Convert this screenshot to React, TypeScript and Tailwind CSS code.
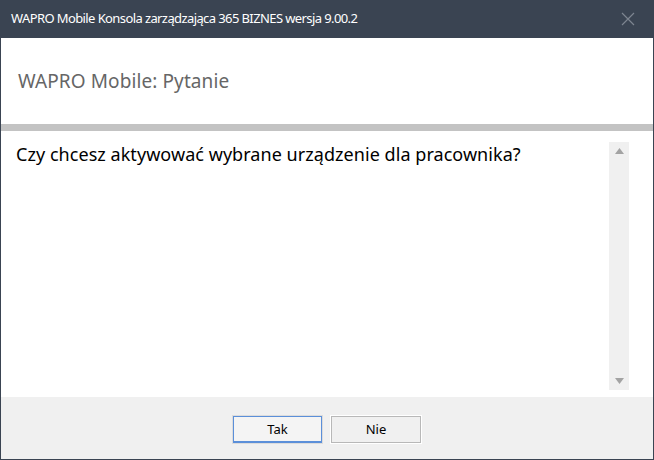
export default function App() {
  return (
    <div className="w-[654px] h-[460px] flex flex-col bg-white border-x border-b border-[#3a4452]" style={{ fontFamily: '"Noto Sans", "Open Sans", sans-serif' }}>
      <div className="h-[38px] shrink-0 bg-[#3a4452] flex items-center justify-between pl-[10px] pr-[18px]">
        <span className="text-[13px] text-white tracking-[-0.6px]">WAPRO Mobile Konsola zarządzająca 365 BIZNES wersja 9.00.2</span>
        <svg width="14" height="14" viewBox="0 0 14 14"><path d="M1 1L13 13M13 1L1 13" stroke="#7d8590" strokeWidth="1.2" /></svg>
      </div>
      <div className="h-[86px] shrink-0 flex items-center pl-[17px]">
        <span className="text-[19px] text-[#666666] tracking-[0.1px]">WAPRO Mobile: Pytanie</span>
      </div>
      <div className="h-[7px] shrink-0 bg-[#c3c3c3]" />
      <div className="flex-1 flex pl-[15px] pr-[24px] pt-[11px] pb-[7px]">
        <div className="flex-1 text-[18px] text-black tracking-[0.05px] leading-[24px]">Czy chcesz aktywować wybrane urządzenie dla pracownika?</div>
        <div className="w-[20px] bg-[#f0f0f0] flex flex-col justify-between items-center py-[6px]">
          <svg width="9" height="6" viewBox="0 0 9 6"><path d="M4.5 0L9 6H0Z" fill="#a3a3a3" /></svg>
          <svg width="9" height="6" viewBox="0 0 9 6"><path d="M0 0H9L4.5 6Z" fill="#a3a3a3" /></svg>
        </div>
      </div>
      <div className="h-[62px] shrink-0 bg-[#f0f0f0] flex justify-center items-start pt-[19px] gap-[9px]">
        <button className="w-[89px] h-[27px] bg-[#f4f4f4] border border-[#5b8fd9] outline outline-1 outline-[#dcdcdc] text-[13px] text-black shadow-[inset_0_-1px_0_#5b8fd9]">Tak</button>
        <button className="w-[90px] h-[27px] bg-[#f0f0f0] border border-[#b8b8b8] outline outline-1 outline-white text-[13px] text-black">Nie</button>
      </div>
    </div>
  );
}
